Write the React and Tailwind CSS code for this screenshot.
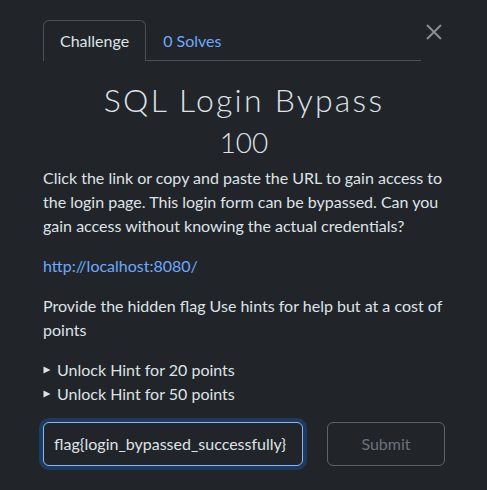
import React from 'react'

function Hint({ points }) {
    return (
        <div className="flex items-center h-6">
            <span className="w-[14px] flex items-center">
                <svg width="8" height="8" viewBox="0 0 8 8" className="fill-[#dee2e6]">
                    <path d="M0.5 0.5 L7.5 4 L0.5 7.5 Z" />
                </svg>
            </span>
            <span>Unlock Hint for {points} points</span>
        </div>
    )
}

function App() {
    return (
        <div
            className="w-[487px] h-[490px] bg-[#212529] text-[#dee2e6] overflow-hidden"
            style={{ fontFamily: 'Lato, "Noto Sans", sans-serif' }}
        >
            <div className="pl-[43px] pr-[42px] pt-[20px]">
                <div className="flex items-start">
                    <div className="flex flex-1 border-b border-[#495057] h-[41px]">
                        <div className="h-[41px] px-4 flex items-center border border-b-0 border-[#495057] rounded-t-md bg-[#212529] text-base text-[#dee2e6] -mb-px">
                            Challenge
                        </div>
                        <div className="h-[41px] px-4 flex items-center border border-transparent text-base text-[#6ea8fe]">
                            0 Solves
                        </div>
                    </div>
                    <button className="w-[24px] h-[41px] flex items-start justify-end pt-[4px] pr-[3px] text-[#8d9096]">
                        <svg width="16" height="16" viewBox="0 0 16 16" fill="none" stroke="currentColor" strokeWidth="1.8">
                            <path d="M1 1 L15 15 M15 1 L1 15" />
                        </svg>
                    </button>
                </div>

                <h2 className="mt-[20px] text-center text-[32px] leading-[38px] font-light tracking-[0.07em]">
                    SQL Login Bypass
                </h2>
                <h4 className="mt-[6px] text-center text-[28px] leading-[34px] font-light">100</h4>

                <div className="mt-[7px] text-base leading-6">
                    <p className="mb-4">
                        Click the link or copy and paste the URL to gain access to the login page. This login form can be bypassed. Can you gain access without knowing the actual credentials?
                    </p>
                    <p className="mb-4">
                        <a className="text-[#6ea8fe]">http://localhost:8080/</a>
                    </p>
                    <p className="mb-4">Provide the hidden flag Use hints for help but at a cost of points</p>
                    <div className="mb-4">
                        <Hint points={20} />
                        <Hint points={50} />
                    </div>
                </div>

                <div className="flex gap-6">
                    <div className="w-[260px] h-[44px] rounded-md border border-[#86b7fe] ring-4 ring-[#1f3a5f] bg-[#212529] flex items-center px-[10px] text-base text-[#dee2e6]">
                        {'flag{login_bypassed_successfully}'}
                    </div>
                    <button className="w-[118px] h-[44px] rounded-md border border-[#5c636a] text-base text-[#6c727a]">
                        Submit
                    </button>
                </div>
            </div>
        </div>
    )
}

export default App
